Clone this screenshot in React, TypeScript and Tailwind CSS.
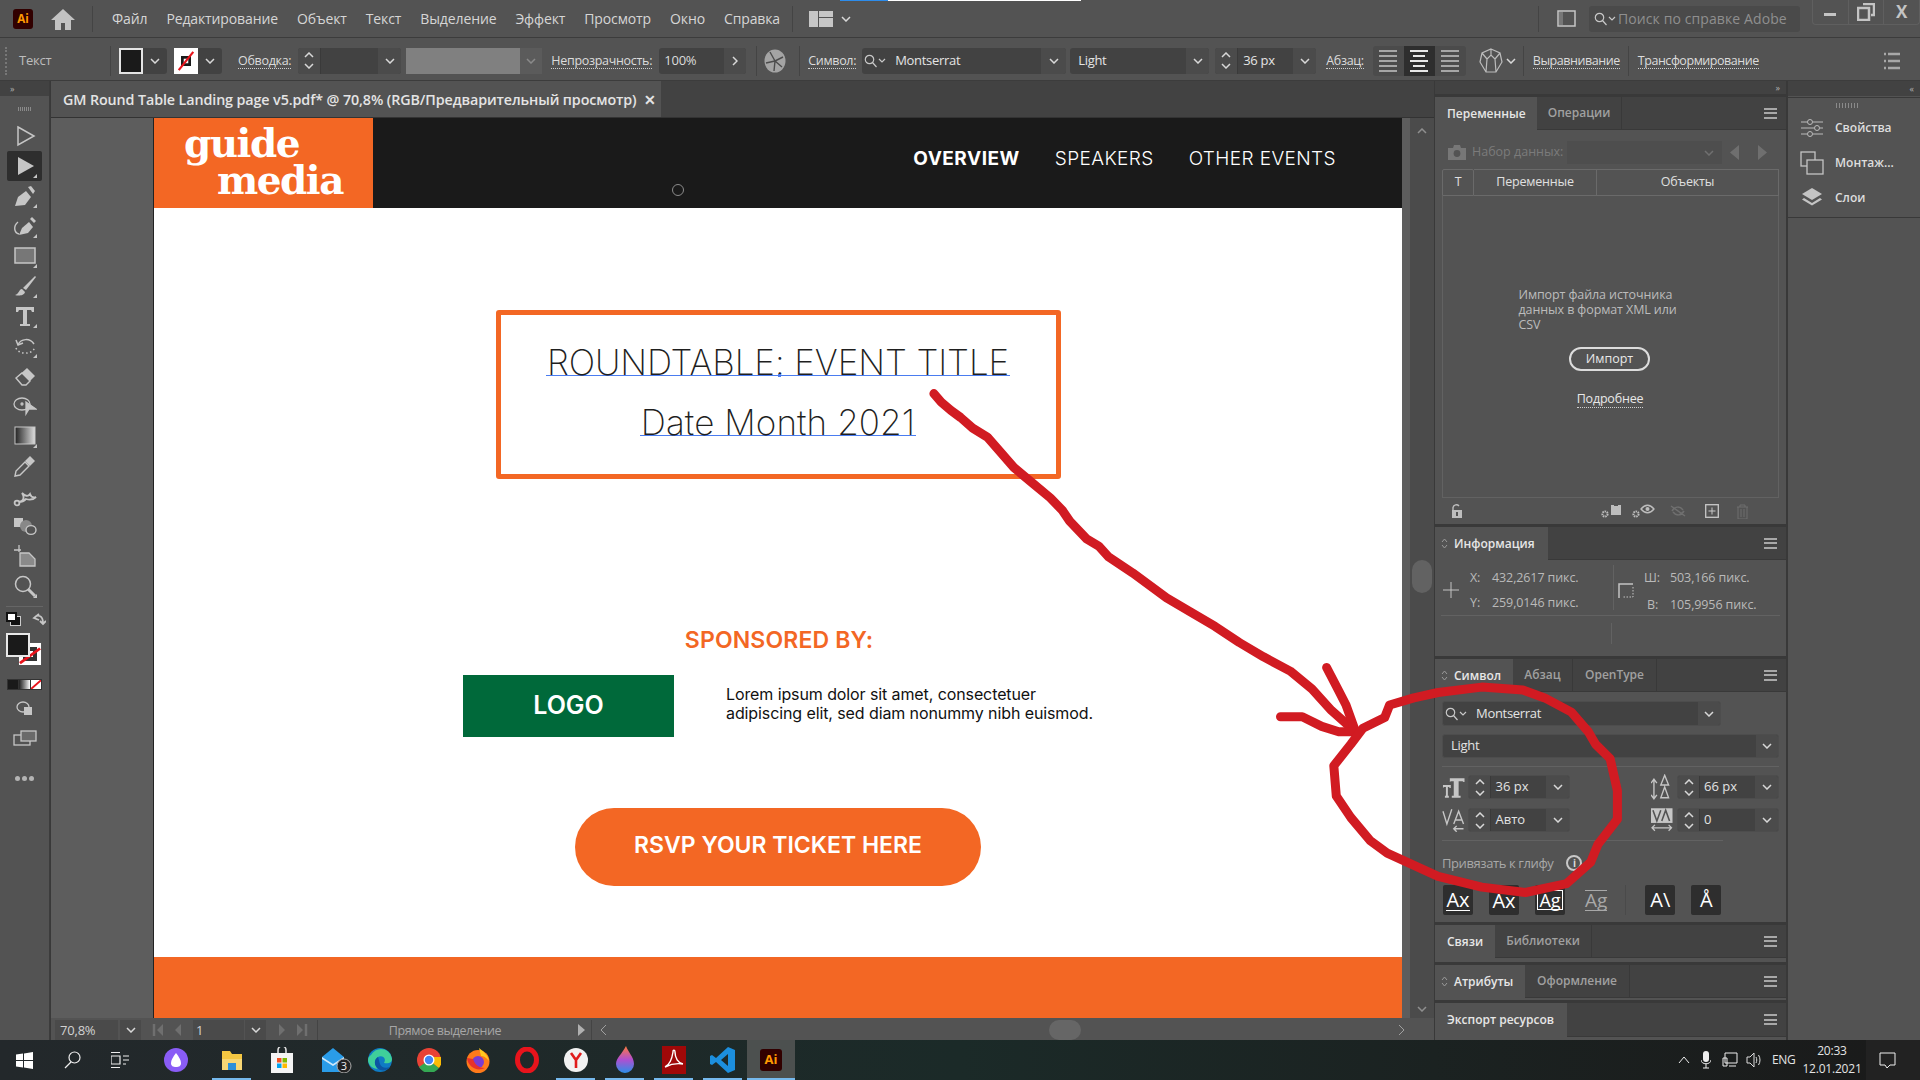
import React from "react";

const G = "#c6c6c6";

function Chev({ c = "#d8d8d8", w = 10, up = false }: { c?: string; w?: number; up?: boolean }) {
  return (
    <svg width={w} height={6} viewBox="0 0 10 6" className="shrink-0">
      <path d={up ? "M1 5l4-4 4 4" : "M1 1l4 4 4-4"} stroke={c} strokeWidth={1.5} fill="none" />
    </svg>
  );
}

function Step({ w = 23 }: { w?: number }) {
  return (
    <div className="flex flex-col items-center justify-center gap-[5px] border-r border-[#3a3a3a] bg-[#4b4b4b] shrink-0 h-full" style={{ width: w }}>
      <Chev up />
      <Chev />
    </div>
  );
}

function ChevBox({ w = 23 }: { w?: number }) {
  return (
    <div className="flex items-center justify-center bg-[#4b4b4b] h-full shrink-0" style={{ width: w }}>
      <Chev />
    </div>
  );
}

function Search() {
  return (
    <svg width={22} height={14} viewBox="0 0 22 14" className="shrink-0">
      <circle cx={5.5} cy={5.5} r={4.2} stroke="#c8c8c8" strokeWidth={1.2} fill="none" />
      <path d="M8.5 8.5l4 4.5M15 5l3 3 3-3" stroke="#c8c8c8" strokeWidth={1.2} fill="none" />
    </svg>
  );
}

function Hamburger() {
  return (
    <div className="ml-auto mr-[9px] flex flex-col gap-[2.5px]">
      <span className="block w-[13px] h-[2px] bg-[#a8a8a8]" />
      <span className="block w-[13px] h-[2px] bg-[#a8a8a8]" />
      <span className="block w-[13px] h-[2px] bg-[#a8a8a8]" />
    </div>
  );
}

function Sort() {
  return (
    <svg width={7} height={11} viewBox="0 0 7 11" className="shrink-0 mr-[6px]">
      <path d="M1 4l2.5-3L6 4M1 7l2.5 3L6 7" stroke="#9a9a9a" fill="none" />
    </svg>
  );
}

function Tabs({ tabs, sort = false, h = 33 }: { tabs: [string, number][]; sort?: boolean; h?: number }) {
  return (
    <div className="flex items-stretch bg-[#424242] border-b border-[#393939] shrink-0" style={{ height: h }}>
      {tabs.map(([t, w], i) => (
        <div
          key={t}
          className={
            i === 0
              ? "flex items-center bg-[#535353] text-[#e6e6e6] text-[12px] font-semibold -mb-px"
              : "flex items-center justify-center border-r border-[#393939] text-[#a0a0a0] text-[12px] font-semibold"
          }
          style={{ width: w, paddingLeft: i === 0 ? (sort ? 6 : 12) : 0 }}
        >
          {i === 0 && sort && <Sort />}
          {t}
        </div>
      ))}
      <div className="flex-1 flex items-center">
        <Hamburger />
      </div>
    </div>
  );
}

function Ai({ s = 20 }: { s?: number }) {
  return (
    <div className="flex items-center justify-center rounded-[3px] bg-[#310000] text-[#ff9a00] font-bold shrink-0" style={{ width: s, height: s, fontSize: s * 0.58 }}>
      Ai
    </div>
  );
}

function Uline({ children, cls = "" }: { children: React.ReactNode; cls?: string }) {
  return <span className={"text-[12.5px] leading-[15px] text-[#dcdcdc] border-b border-dotted border-[#cfcfcf] shrink-0 " + cls}>{children}</span>;
}

const Vsep = ({ cls = "" }: { cls?: string }) => <div className={"w-px h-[30px] bg-[#444] shrink-0 " + cls} />;

function TitleBar() {
  const menu = ["Файл", "Редактирование", "Объект", "Текст", "Выделение", "Эффект", "Просмотр", "Окно", "Справка"];
  return (
    <div className="relative h-[38px] flex items-center bg-[#535353] border-b border-[#3c3c3c] shrink-0">
      <div className="absolute top-0 left-[840px] h-px w-[48px] bg-[#2d8ceb]" />
      <div className="absolute top-0 left-[888px] h-px w-[193px] bg-white" />
      <div className="ml-[13px]"><Ai s={20} /></div>
      <svg width={24} height={22} viewBox="0 0 24 22" className="ml-[18px]"><path d="M12 1L0 12h4v10h6v-7h4v7h6V12h4z" fill="#c2c2c2" /></svg>
      <div className="ml-[17px] w-px h-[26px] bg-[#444]" />
      <div className="ml-[19px] flex gap-[19px] text-[14px] tracking-[-0.12px] text-[#d6d6d6]">
        {menu.map((m) => <span key={m}>{m}</span>)}
      </div>
      <div className="ml-[12px] w-px h-[26px] bg-[#444]" />
      <svg width={24} height={16} viewBox="0 0 24 16" className="ml-[16px]"><path d="M0 0h9v16H0zM10 0h14v6H10zM10 7h14v9H10z" fill="#c6c6c6" /></svg>
      <div className="ml-[8px]"><Chev /></div>
      <div className="ml-auto flex items-center h-full">
        <div className="w-px h-[26px] bg-[#444]" />
        <svg width={19} height={19} viewBox="0 0 19 19" className="ml-[18px]"><rect x={1} y={2} width={17} height={15} fill="none" stroke="#c6c6c6" strokeWidth={1.5} /><rect x={2} y={3} width={4} height={13} fill="#777" /></svg>
        <div className="ml-[13px] w-[211px] h-[26px] rounded-[3px] bg-[#4a4a4a] flex items-center pl-[5px] gap-[2px] text-[14px] tracking-[0.1px] text-[#8f8f8f] whitespace-nowrap overflow-hidden">
          <Search />
          <span>Поиск по справке Adobe</span>
        </div>
        <div className="ml-[12px] mb-[13px] w-[108px] h-[25px] flex border border-[#5f5f5f] rounded-b-[4px] border-t-0">
          <div className="flex-1 flex items-center justify-center border-r border-[#5f5f5f]"><span className="block w-[12px] h-[3px] bg-[#c4c4c4] mt-[5px]" /></div>
          <div className="flex-1 flex items-center justify-center border-r border-[#5f5f5f]">
            <svg width={18} height={18} viewBox="0 0 18 18"><path d="M6 1h11v11h-3M1 5h11v12H1z" fill="none" stroke="#c4c4c4" strokeWidth={2.5} /></svg>
          </div>
          <div className="flex-1 flex items-center justify-center text-[17px] font-bold text-[#c4c4c4]">X</div>
        </div>
      </div>
    </div>
  );
}

function Swatch({ stroke = false }: { stroke?: boolean }) {
  return (
    <div className="flex h-[26px] w-[48px] bg-[#424242] rounded-[3px] shrink-0 items-stretch">
      <div className={"w-[24px] relative border-2 " + (stroke ? "bg-white border-white" : "bg-[#1a1a1a] border-[#e4e4e4]")}>
        {stroke && (
          <svg viewBox="0 0 22 22" className="absolute inset-0 w-full h-full">
            <rect x={7} y={7} width={8} height={8} fill="none" stroke="#1a1a1a" strokeWidth={3} />
            <path d="M3 21L19 1" stroke="#e8141c" strokeWidth={2.4} />
          </svg>
        )}
      </div>
      <div className="flex-1 flex items-center justify-center"><Chev /></div>
    </div>
  );
}

function ControlBar() {
  return (
    <div className="h-[43px] flex items-center pt-[3px] bg-[#535353] border-b border-[#3c3c3c] shrink-0 text-[12.5px] text-[#dcdcdc]">
      <div className="ml-[5px] w-[2px] h-[28px] border-l-2 border-dotted border-[#777]" />
      <span className="ml-[12px] w-[91px] text-[13px] tracking-[-0.2px] text-[#bdbdbd]">Текст</span>
      <div className="w-px h-[30px] bg-[#444]" />
      <div className="ml-[8px]"><Swatch /></div>
      <div className="ml-[7px]"><Swatch stroke /></div>
      <Uline cls="ml-[16px] tracking-[-0.3px]">Обводка:</Uline>
      <div className="ml-[7px] flex h-[26px] w-[103px] rounded-[3px] overflow-hidden bg-[#424242]">
        <Step />
        <div className="w-[57px]" />
        <ChevBox />
      </div>
      <div className="ml-[5px] w-[114px] h-[26px] bg-[#808080]" />
      <div className="w-[22px] h-[26px] bg-[#5b5b5b] flex items-center justify-center"><Chev c="#8a8a8a" /></div>
      <Uline cls="ml-[9px] tracking-[-0.3px]">Непрозрачность:</Uline>
      <div className="ml-[7px] flex h-[26px] w-[87px] rounded-[3px] overflow-hidden bg-[#424242] items-center pl-[5px] text-[13px] tracking-[-0.2px]">
        <span className="w-[60px]">100%</span>
        <div className="flex-1 h-full bg-[#4b4b4b] flex items-center justify-center">
          <svg width={6} height={10} viewBox="0 0 6 10"><path d="M1 1l4 4-4 4" stroke="#d8d8d8" strokeWidth={1.5} fill="none" /></svg>
        </div>
      </div>
      <Vsep cls="ml-[10px]" />
      <svg width={22} height={24} viewBox="0 0 22 24" className="ml-[7px]"><ellipse cx={11} cy={12} rx={10.5} ry={11.5} fill="#a4a4a4" /><path d="M11 12L6 3M11 12l8-4M11 12l-1 10M11 12l7 6M11 12L2 14" stroke="#4c4c4c" strokeWidth={1.4} /></svg>
      <Vsep cls="ml-[13px]" />
      <Uline cls="ml-[8px] tracking-[-0.3px]">Символ:</Uline>
      <div className="ml-[6px] flex h-[26px] w-[204px] rounded-[3px] overflow-hidden bg-[#424242] items-center pl-[2px] text-[13px] tracking-[-0.3px] text-[#e4e4e4]">
        <Search />
        <span className="ml-[9px] flex-1">Montserrat</span>
        <ChevBox w={25} />
      </div>
      <div className="ml-[4px] flex h-[26px] w-[139px] rounded-[3px] overflow-hidden bg-[#424242] items-center pl-[8px] text-[13px] tracking-[-0.3px] text-[#e4e4e4]">
        <span className="flex-1">Light</span>
        <ChevBox w={23} />
      </div>
      <div className="ml-[6px] flex h-[26px] w-[101px] rounded-[3px] overflow-hidden bg-[#424242] items-center text-[13px] tracking-[-0.3px] text-[#e4e4e4]">
        <Step />
        <span className="ml-[5px] flex-1">36 px</span>
        <ChevBox />
      </div>
      <Uline cls="ml-[10px] tracking-[-0.3px]">Абзац:</Uline>
      <div className="ml-[9px] flex h-[30px] w-[93px] rounded-[3px] bg-[#4b4b4b] overflow-hidden">
        {[0, 1, 2].map((i) => (
          <div key={i} className={"flex-1 flex flex-col items-center justify-center gap-[3px] " + (i === 1 ? "bg-[#2e2e2e]" : "")}>
            {[18, 12, 18, 12, 18].map((w, k) => (
              <span key={k} className={"block h-[2px] " + (i === 1 ? "bg-[#e8e8e8]" : "bg-[#a6a6a6]")} style={{ width: i === 1 ? w : 18 }} />
            ))}
          </div>
        ))}
      </div>
      <svg width={24} height={26} viewBox="0 0 24 26" className="ml-[13px]"><path d="M12 1l9 4 2 9-6 10H7L1 14l2-9zM12 1v6M7 24l1-13 4-4 4 4 1 13M3 5l5 6M21 5l-5 6" fill="none" stroke="#bcbcbc" strokeWidth={1.2} /></svg>
      <div className="ml-[3px]"><Chev /></div>
      <Vsep cls="ml-[7px]" />
      <Uline cls="ml-[9px] tracking-[-0.45px]">Выравнивание</Uline>
      <Vsep cls="ml-[8px]" />
      <Uline cls="ml-[9px] tracking-[-0.45px]">Трансформирование</Uline>
      <svg width={16} height={18} viewBox="0 0 16 18" className="ml-auto mr-[20px]"><path d="M0 2h2M0 9h2M0 16h2M4 2h12M4 9h12M4 16h12" stroke="#a8a8a8" strokeWidth={2.4} /></svg>
    </div>
  );
}

const corner = <span className="absolute right-[5px] bottom-[3px] w-0 h-0 border-l-[4px] border-l-transparent border-b-[4px] border-b-[#c6c6c6]" />;

const toolIcons: [React.ReactNode, boolean][] = [
  [<path d="M5 3l16 9-16 9z" fill="none" stroke={G} strokeWidth={1.5} />, false],
  [<path d="M5 3l16 9-16 9z" fill={G} />, true],
  [<g fill={G}><path d="M2 22l3-9 8-6 5 6-6 8z" /><path d="M15 3l3-1 4 5-2 3z" /></g>, true],
  [<g fill={G}><path d="M6 21l3-7 7-6 4 5-5 6z" /><path d="M17 5l2-2 4 4-2 2z" /><path d="M5 8c-5 4-4 11 1 12" fill="none" stroke={G} strokeWidth={1.4} /></g>, true],
  [<rect x={2} y={4} width={20} height={15} fill="#777" stroke={G} strokeWidth={1.5} />, true],
  [<g fill={G}><path d="M10 14L22 2l1 1-10 13z" /><path d="M9 15c-3 0-3 5-7 6 3 1 9 1 10-3z" /></g>, true],
  [<path d="M3 3h18v5h-2l-1-2h-4v14h3v2H7v-2h3V6H6L5 8H3z" fill={G} />, true],
  [<g fill="none" stroke={G} strokeWidth={1.5}><path d="M5 11c3-7 12-7 16-1" /><path d="M3 14c2 6 16 8 19-1" strokeDasharray="1.5 2.5" /><path d="M3 6l2 5 5-2" /></g>, true],
  [<g><path d="M3 14L14 4l8 8-9 9H9z" fill={G} /><path d="M3 14l6-5 8 8-4 4H9z" fill="#535353" stroke={G} strokeWidth={1.4} /></g>, false],
  [<g fill="none" stroke={G} strokeWidth={1.3}><ellipse cx={9} cy={10} rx={8} ry={6} /><circle cx={9} cy={10} r={1} /><path d="M13 8l10 7h-7l-3 5z" fill={G} /></g>, false],
  [<g><defs><linearGradient id="tg"><stop offset="0" stopColor="#222" /><stop offset="1" stopColor="#ddd" /></linearGradient></defs><rect x={2} y={3} width={20} height={17} fill="url(#tg)" stroke={G} /></g>, true],
  [<g><path d="M2 22l1-5 9-9 4 4-9 9z" fill="none" stroke={G} strokeWidth={1.4} /><path d="M12 7l5-5 5 5-5 5z" fill={G} /></g>, false],
  [<g fill="none" stroke={G} strokeWidth={1.8}><circle cx={4} cy={19} r={2.4} /><path d="M6 18c6-1 5-6 3-9 3 3 6 4 8 1 1 3 3 4 6 3-3 3-7 3-10 2-2 2-5 3-7 3" /></g>, false],
  [<g><rect x={1} y={4} width={9} height={9} fill={G} /><circle cx={13} cy={12} r={6} fill="#888" /><ellipse cx={18} cy={16} rx={5} ry={4.4} fill="#535353" stroke={G} strokeWidth={1.4} /></g>, false],
  [<g fill="none" stroke={G} strokeWidth={1.3}><path d="M1 6h7M6 1v7" /><path d="M7 9h9l6 6v7H7z" fill="#8a8a8a" /></g>, false],
  [<g fill="none" stroke={G}><circle cx={10} cy={10} r={7.5} strokeWidth={1.5} /><path d="M15 15l7 7" strokeWidth={3} /></g>, true],
];

function Toolbar() {
  return (
    <div className="w-[50px] shrink-0 bg-[#535353] border-r border-[#3c3c3c] flex flex-col">
      <div className="h-[15px] bg-[#424242] flex items-center pl-[10px] text-[9px] leading-none text-[#b0b0b0]">»</div>
      <div className="h-[25px] flex justify-center items-center"><div className="w-[14px] h-[4px] bg-[repeating-linear-gradient(90deg,#8a8a8a_0_1px,transparent_1px_2px)]" /></div>
      {toolIcons.map(([ic, c], i) => (
        <div key={i} className={"relative mx-[7px] h-[30px] flex items-center justify-center rounded-[2px] " + (i === 1 ? "bg-[#2e2e2e]" : "")}>
          <svg width={24} height={24} viewBox="0 0 24 24">{ic}</svg>
          {c && corner}
        </div>
      ))}
      <div className="mx-[6px] mt-[5px] h-px bg-[#666]" />
      <div className="mt-[5px] h-[14px] relative mx-[6px]">
        <div className="absolute left-0 top-0 w-[11px] h-[10px] bg-white border-2 border-[#111] z-10" />
        <div className="absolute left-[4px] top-[4px] w-[11px] h-[10px] bg-[#111] border border-[#ccc]" />
        <svg width={14} height={14} viewBox="0 0 14 14" className="absolute left-[26px] top-0"><path d="M2 6c3-4 9-3 9 5M7 2L2 6l5 2M8 9l3 3 3-3" fill="none" stroke={G} strokeWidth={1.8} /></svg>
      </div>
      <div className="relative h-[33px] mx-[6px] mt-[7px]">
        <div className="absolute left-[12px] top-[9px] w-[24px] h-[24px] bg-white border border-[#555]">
          <div className="absolute left-[4px] top-[4px] w-[14px] h-[14px] border-[4px] border-[#333]" />
          <svg viewBox="0 0 24 24" className="absolute inset-0"><path d="M1 22L23 6" stroke="#e8141c" strokeWidth={3} /></svg>
        </div>
        <div className="absolute left-0 top-0 w-[24px] h-[24px] bg-[#1a1a1a] border-2 border-[#e8e8e8]" />
      </div>
      <div className="mx-[7px] mt-[13px] h-[11px] flex bg-[#333] p-px gap-px">
        <div className="flex-1 bg-[#1a1a1a]" />
        <div className="flex-1 bg-gradient-to-r from-[#222] to-white" />
        <div className="flex-1 bg-white relative overflow-hidden"><svg viewBox="0 0 10 10" preserveAspectRatio="none" className="absolute inset-0 w-full h-full"><path d="M0 10L10 0" stroke="#e8141c" strokeWidth={2} /></svg></div>
      </div>
      <div className="mt-[11px] flex justify-center"><svg width={18} height={14} viewBox="0 0 18 14"><ellipse cx={7} cy={6} rx={6} ry={5} fill="none" stroke={G} strokeWidth={1.3} /><rect x={8} y={6} width={8} height={8} fill={G} /></svg></div>
      <div className="mt-[15px] flex justify-center"><svg width={24} height={16} viewBox="0 0 24 16"><rect x={1} y={5} width={16} height={10} fill="none" stroke={G} strokeWidth={1.3} /><rect x={8} y={1} width={15} height={10} fill="#6a6a6a" stroke={G} strokeWidth={1.3} /></svg></div>
      <div className="mt-[30px] flex justify-center gap-[2px]">
        {[0, 1, 2].map((i) => <span key={i} className="block w-[5px] h-[5px] rounded-full bg-[#b4b4b4]" />)}
      </div>
    </div>
  );
}

const mont = "font-['Inter',sans-serif]";

function Artboard() {
  return (
    <div className="w-[1249px] h-full flex flex-col bg-white border-l border-[#222] shrink-0 relative">
      <div className="relative h-[90px] flex shrink-0 bg-[#1a1a1a]">
        <div className="w-[219px] bg-[#f36724] font-['DejaVu_Serif',serif] font-bold text-white text-[39px] leading-[37px] tracking-[-1.5px] pl-[30px] pt-[7px]">
          <div>guide</div>
          <div className="pl-[33px]">media</div>
        </div>
        <div className={"flex-1 flex items-center justify-end pr-[66px] pb-[8px] text-white text-[19px] gap-[35px] " + mont}>
          <span className="font-bold tracking-[0.5px]">OVERVIEW</span>
          <span className="font-light tracking-[0.4px]">SPEAKERS</span>
          <span className="font-light tracking-[0.4px]">OTHER EVENTS</span>
        </div>
        <span className="absolute left-[518px] top-[66px] w-[12px] h-[12px] rounded-full border border-[#8b8b8b]" />
      </div>
      <div className={"flex-1 flex flex-col items-center " + mont}>
        <div className="mt-[102px] w-[565px] h-[169px] border-[5px] border-[#f36724] rounded-[3px] flex flex-col items-center text-[#1f1f1f] text-[35px] font-extralight">
          <div className="mt-[33px] h-[28px] leading-[28px] border-b border-[#4a7cf0] tracking-[-0.1px] px-[1px] relative">
            ROUNDTABLE: EVENT TITLE
            <span className="absolute left-1/2 -bottom-[2px] w-[3px] h-[3px] bg-[#4a7cf0]" />
          </div>
          <div className="mt-[32px] h-[28px] leading-[28px] border-b border-[#4a7cf0] tracking-[0.1px] px-[1px]">Date Month 2021</div>
        </div>
        <div className="mt-[148px] text-[#f36724] text-[23px] font-semibold tracking-[0.15px] leading-[27px] ml-[2px]">SPONSORED BY:</div>
        <div className="mt-[21px] w-full pl-[309px] flex items-center">
          <div className="w-[211px] h-[62px] bg-[#00693a] flex items-center justify-center text-white text-[25px] font-semibold">LOGO</div>
          <div className="ml-[52px] text-[16px] leading-[19px] text-[#111] tracking-[-0.1px] mb-[4px]">
            <div>Lorem ipsum dolor sit amet, consectetuer</div>
            <div>adipiscing elit, sed diam nonummy nibh euismod.</div>
          </div>
        </div>
        <div className="mt-[71px] w-[406px] h-[78px] rounded-[39px] bg-[#f36724] flex items-center justify-center text-white text-[23px] font-semibold pb-[3px]">RSVP YOUR TICKET HERE</div>
      </div>
      <div className="h-[61px] bg-[#f36724] shrink-0" />
    </div>
  );
}

function StatusBar() {
  const Nav = ({ r = false, first = false }: { r?: boolean; first?: boolean }) => (
    <svg width={14} height={14} viewBox="0 0 14 14" style={{ transform: r ? "scaleX(-1)" : undefined }}>
      <path d="M12 1L6 7l6 6z" fill="#6f6f6f" />
      {first && <path d="M3 1v12" stroke="#6f6f6f" strokeWidth={2.5} />}
    </svg>
  );
  return (
    <div className="h-[22px] shrink-0 flex items-center bg-[#535353] text-[13px] tracking-[-0.2px] text-[#d2d2d2] pt-[2px]">
      <div className="ml-[4px] w-[63px] h-full bg-[#4a4a4a] pl-[5px] pt-[2px] flex items-center">70,8%</div>
      <div className="ml-[2px] w-[21px] h-full bg-[#4a4a4a] flex items-center justify-center"><Chev /></div>
      <div className="ml-[10px] flex gap-[4px]"><Nav first /><Nav /></div>
      <div className="ml-[10px] w-[51px] h-full bg-[#4a4a4a] pl-[3px] pt-[2px] flex items-center">1</div>
      <div className="ml-px w-[21px] h-full bg-[#4a4a4a] flex items-center justify-center"><Chev /></div>
      <div className="ml-[11px] flex gap-[4px]"><Nav r /><Nav r first /></div>
      <div className="ml-[8px] w-px h-full bg-[#444]" />
      <div className="w-[260px] text-center text-[#a6a6a6] pr-[6px] pt-[3px] text-[12.5px] tracking-[-0.4px]">Прямое выделение</div>
      <svg width={7} height={12} viewBox="0 0 7 12"><path d="M0 0l7 6-7 6z" fill="#b0b0b0" /></svg>
      <div className="ml-[6px] w-px h-full bg-[#444]" />
      <svg width={7} height={12} viewBox="0 0 7 12" className="ml-[8px]"><path d="M6 1L1 6l5 5" stroke="#a0a0a0" fill="none" /></svg>
      <div className="ml-[442px] w-[32px] h-full rounded-[14px] bg-[#666]" />
      <svg width={7} height={12} viewBox="0 0 7 12" className="ml-[317px]"><path d="M1 1l5 5-5 5" stroke="#a0a0a0" fill="none" /></svg>
    </div>
  );
}

function Center() {
  return (
    <div className="w-[1383px] ml-[1px] shrink-0 flex flex-col">
      <div className="h-[37px] shrink-0 flex bg-[#424242] border-b border-[#333]">
        <div className="w-[610px] bg-[#535353] flex items-center pl-[12px] pt-[1px] text-[14.3px] font-semibold tracking-[-0.1px] text-[#e4e4e4] whitespace-nowrap">
          GM Round Table Landing page v5.pdf* @ 70,8% (RGB/Предварительный просмотр)
          <span className="ml-auto mr-[5px] text-[14px] font-bold">✕</span>
        </div>
      </div>
      <div className="flex-1 flex min-h-0">
        <div className="w-[102px] bg-[#5d5d5d] shrink-0" />
        <Artboard />
        <div className="w-[8px] bg-[#5d5d5d] shrink-0" />
        <div className="flex-1 bg-[#4b4b4b] flex flex-col items-center pt-[10px] pb-[6px]">
          <Chev c="#8f8f8f" up />
          <div className="mt-[426px] w-[20px] h-[33px] rounded-[10px] bg-[#626262]" />
          <div className="mt-auto"><Chev c="#8f8f8f" /></div>
        </div>
      </div>
      <StatusBar />
    </div>
  );
}

const cellH = "flex items-center h-[24px] rounded-[3px] bg-[#424242] border border-[#4d4d4d] overflow-hidden";

function Spin({ v }: { v: string }) {
  return (
    <div className={cellH + " w-[102px] text-[13px] text-[#e2e2e2]"}>
      <Step w={22} />
      <span className="flex-1 pl-[4px]">{v}</span>
      <ChevBox w={23} />
    </div>
  );
}

function GlyphBtn({ children }: { children: React.ReactNode }) {
  return <div className="w-[30px] h-[30px] rounded-[2px] bg-[#2e2e2e] flex items-center justify-center text-white text-[20px] leading-none shrink-0">{children}</div>;
}

function Panels() {
  const ic = { fill: "none", stroke: "#bdbdbd", strokeWidth: 1.3 };
  return (
    <div className="w-[351px] shrink-0 ml-[1px] flex flex-col gap-[3px] bg-[#393939]">
      <div className="h-[13px] bg-[#424242] flex items-center justify-end pr-[6px] text-[9px] leading-none text-[#b0b0b0]">»</div>

      <div className="h-[427px] shrink-0 flex flex-col bg-[#535353]">
        <Tabs tabs={[["Переменные", 102], ["Операции", 85]]} />
        <div className="h-[39px] shrink-0 flex items-center pl-[13px] pt-[6px] text-[12.5px] text-[#7b7b7b]">
          <svg width={18} height={15} viewBox="0 0 18 15"><path d="M0 3h5l1-3h6l1 3h5v12H0z" fill="#777" /><circle cx={9} cy={8.5} r={3.4} fill="#535353" /></svg>
          <span className="ml-[6px]">Набор данных:</span>
          <div className="ml-[4px] w-[155px] h-[23px] bg-[#4e4e4e] flex items-center justify-end pr-[8px]"><Chev c="#707070" /></div>
          <svg width={37} height={15} viewBox="0 0 37 15" className="ml-[8px]"><path d="M9 0v15L0 7.5zM28 0v15l9-7.5z" fill="#6f6f6f" /></svg>
        </div>
        <div className="mx-[7px] flex h-[27px] text-[12.5px] tracking-[-0.2px] text-[#e0e0e0] shrink-0">
          <div className="w-[32px] border border-[#6a6a6a] rounded-t-[2px] flex items-center justify-center">T</div>
          <div className="w-[123px] border border-[#6a6a6a] border-l-0 flex items-center justify-center">Переменные</div>
          <div className="flex-1 border border-[#6a6a6a] border-l-0 flex items-center justify-center">Объекты</div>
        </div>
        <div className="mx-[7px] flex-1 border border-t-0 border-[#626262] flex flex-col items-center">
          <div className="mt-[91px] w-[180px] ml-[-4px] text-[12.5px] leading-[15px] tracking-[-0.1px] text-[#bcbcbc]">Импорт файла источника данных в формат XML или CSV</div>
          <div className="mt-[15px] w-[81px] h-[24px] rounded-full border-2 border-[#dcdcdc] flex items-center justify-center text-[12.5px] text-[#e8e8e8] -ml-[2px]">Импорт</div>
          <div className="mt-[14px] -ml-[1px]"><span className="text-[12.5px] tracking-[-0.2px] text-[#e8e8e8] border-b border-dotted border-[#cfcfcf]">Подробнее</span></div>
        </div>
        <div className="h-[26px] shrink-0 relative flex items-center pl-[16px]">
          <svg width={13} height={14} viewBox="0 0 13 14"><path d="M2 6V3.5a3.5 3.5 0 016-1.5" fill="none" stroke="#bdbdbd" strokeWidth={1.4} /><rect x={1} y={6} width={10} height={8} fill="#bdbdbd" /><rect x={5} y={8} width={2} height={4} fill="#535353" /></svg>
          <svg width={24} height={14} viewBox="0 0 24 14" className="ml-[136px]"><circle cx={5} cy={10} r={2.6} {...ic} strokeWidth={2} strokeDasharray="1.5 0.8" /><path d="M11 1h3v1h4V1h3v10H11z" fill="#bdbdbd" /></svg>
          <svg width={24} height={14} viewBox="0 0 24 14" className="ml-[7px]"><circle cx={5} cy={10} r={2.6} {...ic} strokeWidth={2} strokeDasharray="1.5 0.8" /><path d="M10 5c4-5 9-5 13 0-4 5-9 5-13 0z" {...ic} /><circle cx={16.5} cy={5} r={2} fill="#bdbdbd" /></svg>
          <svg width={18} height={14} viewBox="0 0 18 14" className="ml-[14px]"><path d="M3 7c3-5 8-5 11-1M15 7c-3 5-8 5-11 1M2 2l14 10" fill="none" stroke="#6f6f6f" strokeWidth={1.5} /></svg>
          <svg width={14} height={14} viewBox="0 0 14 14" className="ml-[18px]"><rect x={.7} y={.7} width={12.6} height={12.6} fill="none" stroke="#c8c8c8" strokeWidth={1.3} /><path d="M7 3.5v7M3.5 7h7" stroke="#c8c8c8" /></svg>
          <svg width={13} height={15} viewBox="0 0 13 15" className="ml-[17px]"><path d="M1 3h11M4 3V1h5v2M2 3v12h9V3M5 5v8M8 5v8" fill="none" stroke="#6f6f6f" /></svg>
        </div>
      </div>

      <div className="h-[129px] shrink-0 flex flex-col bg-[#535353]">
        <Tabs sort tabs={[["Информация", 113]]} />
        <div className="relative flex-1 text-[12.5px] tracking-[-0.1px] text-[#bababa]">
          <div className="flex h-[56px] mx-[6px] border-b border-[#626262] pt-[10px]">
            <svg width={18} height={18} viewBox="0 0 18 18" className="mt-[11px] ml-px"><path d="M9 1v16M1 9h16" stroke="#c4c4c4" /></svg>
            <div className="ml-[9px] w-[144px] flex flex-col gap-[10px] leading-[15px]">
              <div className="flex"><span className="w-[23px] pl-[1px]">X:</span>432,2617 пикс.</div>
              <div className="flex"><span className="w-[23px] pl-[1px]">Y:</span>259,0146 пикс.</div>
            </div>
            <div className="w-px h-[45px] bg-[#626262] -mt-[5px]" />
            <svg width={18} height={18} viewBox="0 0 18 18" className="mt-[11px] ml-[3px]"><path d="M2 17V3h14" fill="none" stroke="#c4c4c4" strokeWidth={1.5} /><path d="M16 6v10H6" fill="none" stroke="#c4c4c4" strokeDasharray="1.5 1.5" /></svg>
            <div className="ml-[9px] flex flex-col gap-[10px] leading-[15px]">
              <div className="flex"><span className="w-[26px]">Ш:</span>503,166 пикс.</div>
              <div className="flex mt-[2px]"><span className="w-[26px] pl-[3px]">В:</span>105,9956 пикс.</div>
            </div>
          </div>
          <div className="ml-[176px] mt-[7px] w-px h-[21px] bg-[#626262]" />
        </div>
      </div>

      <div className="h-[263px] shrink-0 flex flex-col bg-[#535353]">
        <Tabs sort tabs={[["Символ", 78], ["Абзац", 60], ["OpenType", 84]]} />
        <div className="px-[7px] flex flex-col flex-1">
          <div className={cellH + " mt-[9px] w-[279px] h-[25px] pl-[2px] text-[13px] tracking-[-0.3px] text-[#e4e4e4]"}>
            <Search />
            <span className="ml-[9px] flex-1">Montserrat</span>
            <ChevBox w={22} />
          </div>
          <div className={cellH + " mt-[8px] w-full pl-[8px] text-[13px] tracking-[-0.3px] text-[#e4e4e4]"}>
            <span className="flex-1">Light</span>
            <ChevBox w={22} />
          </div>
          <div className="mt-[8px] h-px bg-[#626262]" />
          <div className="mt-[7px] flex items-center">
            <svg width={24} height={24} viewBox="0 0 24 24"><path d="M8 3h15v4h-1l-1-1h-4v15h2v2H10v-2h2V6H9L8 7zM1 10h8v3H8l-1-1H6v9h1v2H3v-2h1v-9H2l-1 1z" fill={G} /></svg>
            <div className="ml-[3px]"><Spin v="36 px" /></div>
            <svg width={22} height={26} viewBox="0 0 22 26" className="ml-[81px]"><path d="M14 1l-4 10h8zM14 13l-4 11h8zM3 6v18M0 9l3-4 3 4M0 21l3 4 3-4" fill="none" stroke={G} strokeWidth={1.4} /></svg>
            <div className="ml-[4px]"><Spin v="66 px" /></div>
          </div>
          <div className="mt-[8px] flex items-center">
            <svg width={24} height={24} viewBox="0 0 24 24"><path d="M1 3l4 13 5-15M12 16l5-13 5 13M14 12h6M22 21H12M15 18l-3 3 3 3" fill="none" stroke={G} strokeWidth={1.4} /></svg>
            <div className="ml-[3px]"><Spin v="Авто" /></div>
            <svg width={22} height={24} viewBox="0 0 22 24" className="ml-[81px]"><rect width={22} height={15} fill={G} /><path d="M2 2l4 11 4-11M11 13l4-11 4 11" fill="none" stroke="#535353" strokeWidth={1.6} /><path d="M1 20h20M4 17l-3 3 3 3M18 17l3 3-3 3" fill="none" stroke={G} strokeWidth={1.3} /></svg>
            <div className="ml-[4px]"><Spin v="0" /></div>
          </div>
          <div className="mt-[8px] w-[281px] h-px bg-[#626262]" />
          <div className="mt-[13px] flex items-center text-[13px] tracking-[-0.4px] text-[#a8a8a8] leading-[18px]">
            Привязать к глифу
            <span className="ml-[13px] w-[16px] h-[16px] rounded-full border-2 border-[#c8c8c8] flex items-center justify-center text-[10px] font-bold text-[#d8d8d8]">i</span>
          </div>
          <div className="mt-[13px] flex items-center pl-[1px]">
            <GlyphBtn><span className="border-b border-white">Ax</span></GlyphBtn>
            <div className="ml-[16px]"><GlyphBtn><span className="border-t border-white">Ax</span></GlyphBtn></div>
            <div className="ml-[16px]"><GlyphBtn><span className="border border-white px-[1px] text-[18px]">Ag</span></GlyphBtn></div>
            <span className="ml-[20px] text-[19px] text-[#a8a8a8] border-b border-t border-[#a8a8a8] leading-[19px]">Ag</span>
            <div className="ml-[18px] w-px h-[30px] bg-[#4a4a4a]" />
            <div className="ml-[19px]"><GlyphBtn>A\</GlyphBtn></div>
            <div className="ml-[16px]"><GlyphBtn>Å</GlyphBtn></div>
          </div>
        </div>
      </div>

      <div className="h-[37px] shrink-0 bg-[#535353]"><Tabs tabs={[["Связи", 60], ["Библиотеки", 97]]} /></div>
      <div className="h-[35px] shrink-0 bg-[#535353]"><Tabs sort tabs={[["Атрибуты", 90], ["Оформление", 105]]} /></div>
      <div className="flex-1 bg-[#535353]"><Tabs tabs={[["Экспорт ресурсов", 132]]} h={34} /></div>
    </div>
  );
}

function Dock() {
  const row = "flex items-center h-[35px] text-[12px] font-semibold text-[#dedede]";
  return (
    <div className="flex-1 ml-[2px] flex flex-col bg-[#535353]">
      <div className="h-[15px] bg-[#424242] flex items-center justify-end pr-[6px] text-[9px] leading-none text-[#b0b0b0]">«</div>
      <div className="mt-[1px] h-[121px] border-b border-[#393939] shrink-0 border-t-[#393939] border-t">
        <div className="h-[14px] flex justify-center items-center -ml-[12px]"><div className="w-[24px] h-[5px] bg-[repeating-linear-gradient(90deg,#8a8a8a_0_1px,transparent_1px_3px)]" /></div>
        <div className="mt-[-2px]">
          <div className={row}>
            <svg width={22} height={18} viewBox="0 0 22 18" className="ml-[13px]"><g fill="none" stroke="#bcbcbc"><path d="M0 3h6M12 3h10M0 9h13M19 9h3M0 15h6M12 15h10" /><circle cx={9} cy={3} r={2.5} /><circle cx={16} cy={9} r={2.5} /><circle cx={9} cy={15} r={2.5} /></g></svg>
            <span className="ml-[12px]">Свойства</span>
          </div>
          <div className={row}>
            <svg width={24} height={24} viewBox="0 0 24 24" className="ml-[12px]"><g fill="none" stroke="#c4c4c4" strokeWidth={1.3}><rect x={1} y={1} width={14} height={14} /><rect x={7} y={9} width={16} height={14} fill="#535353" /></g></svg>
            <span className="ml-[11px]">Монтаж...</span>
          </div>
          <div className={row}>
            <svg width={22} height={22} viewBox="0 0 22 22" className="ml-[13px]"><path d="M11 1l10 6-10 6L1 7z" fill="#c4c4c4" /><path d="M3 11l8 5 8-5 2 1.5-10 6-10-6z" fill="#c4c4c4" /></svg>
            <span className="ml-[12px]">Слои</span>
          </div>
        </div>
      </div>
    </div>
  );
}

function Scribble() {
  const map = (p: number[][]) => p.map(([x, y]) => `${(900 + x / 2.063).toFixed(1)},${(380 + y / 2.8).toFixed(1)}`).join(" ");
  const shaft = [[70, 38], [85, 62], [105, 85], [125, 105], [150, 135], [180, 160], [200, 190], [235, 245], [270, 285], [310, 330], [335, 365], [350, 395], [385, 445], [410, 465], [430, 495], [480, 540], [550, 610], [600, 650], [650, 690], [700, 735], [750, 775], [805, 815], [850, 865], [890, 925], [940, 985]];
  const head = [[785, 943], [830, 943], [870, 970], [905, 985], [940, 985], [920, 910], [905, 870], [880, 805]];
  const loop = [[1010, 910], [1060, 890], [1110, 875], [1200, 860], [1285, 868], [1330, 890], [1385, 930], [1420, 985], [1435, 1020], [1465, 1060], [1480, 1150], [1480, 1230], [1440, 1300], [1425, 1350], [1375, 1410], [1290, 1435], [1200, 1420], [1110, 1390], [1005, 1325], [970, 1290], [930, 1225], [900, 1165], [895, 1080], [930, 1020], [955, 975], [1000, 945], [1010, 910]];
  return (
    <svg width={1920} height={1080} viewBox="0 0 1920 1080" className="absolute inset-0 pointer-events-none">
      <g fill="none" stroke="#d11b22" strokeWidth={9} strokeLinejoin="round" strokeLinecap="round">
        <polyline points={map(shaft)} />
        <polyline points={map(head)} />
        <polyline points={map(loop)} />
      </g>
    </svg>
  );
}

function Taskbar() {
  const box = "w-[49px] h-full flex items-center justify-center relative shrink-0";
  const Under = () => <span className="absolute bottom-0 left-[5px] right-[5px] h-[2px] bg-[#76b9ed]" />;
  return (
    <div className="h-[40px] shrink-0 flex items-center bg-gradient-to-r from-[#23282b] via-[#1b2a28] to-[#1a1a1a] text-[#e4e4e4]">
      <div className="w-[48px] flex justify-center">
        <svg width={17} height={17} viewBox="0 0 17 17"><path d="M0 2.5l7-1V8H0zM8 1.4l9-1.4v8H8zM0 9h7v6.5l-7-1zM8 9h9v8l-9-1.4z" fill="#fff" /></svg>
      </div>
      <div className="w-[48px] flex justify-center">
        <svg width={17} height={18} viewBox="0 0 17 18"><circle cx={10.5} cy={6.5} r={5.5} fill="none" stroke="#eee" strokeWidth={1.2} /><path d="M7 11l-6 6" stroke="#eee" strokeWidth={1.3} /></svg>
      </div>
      <div className="w-[48px] flex justify-center">
        <svg width={18} height={16} viewBox="0 0 18 16"><path d="M0 .5h9M0 15.5h9M0 4h9v8H0zM12 4h6M12 8h6M12 12h3" fill="none" stroke="#eee" strokeWidth={1.2} /></svg>
      </div>
      <div className="w-[32px] ml-[16px] flex justify-center">
        <svg width={24} height={24} viewBox="0 0 24 24"><circle cx={12} cy={12} r={12} fill="#8a5cf6" /><path d="M12 5c3 4 5 7 5 10s-2 4-5 4-5-1-5-4 2-6 5-10z" fill="#fff" /></svg>
      </div>
      <div className={box + " ml-[15px]"}>
        <svg width={24} height={24} viewBox="0 0 24 24"><path d="M2 3h8l2 3h10v16H2z" fill="#f5c742" /><rect x={2} y={11} width={20} height={11} fill="#f8d775" /><path d="M8 22v-7h8v7" fill="#2d90d9" /></svg>
        <Under />
      </div>
      <div className={box + " ml-[1px]"}>
        <svg width={24} height={26} viewBox="0 0 24 26"><path d="M8 6V3a4 4 0 018 0v3" fill="none" stroke="#ddd" strokeWidth={1.6} /><rect x={1} y={6} width={22} height={20} fill="#f4f4f4" /><rect x={7} y={11} width={4.5} height={4.5} fill="#f25022" /><rect x={12.5} y={11} width={4.5} height={4.5} fill="#7fba00" /><rect x={7} y={16.5} width={4.5} height={4.5} fill="#00a4ef" /><rect x={12.5} y={16.5} width={4.5} height={4.5} fill="#ffb900" /></svg>
      </div>
      <div className={box + " ml-[6px]"}>
        <svg width={30} height={26} viewBox="0 0 30 26"><path d="M0 10L11 1l11 9v15H0z" fill="#2a9ce8" /><path d="M0 10l11 7 11-7v2l-11 7-11-7z" fill="#cfe8fa" /><circle cx={22} cy={19} r={7} fill="#222" stroke="#aaa" /><text x={22} y={23} textAnchor="middle" fontSize={11} fill="#eee">3</text></svg>
      </div>
      <div className={box + " -ml-[6px]"}>
        <svg width={24} height={24} viewBox="0 0 24 24"><circle cx={12} cy={12} r={12} fill="#0f7bc4" /><path d="M3 7C8-2 22-1 24 11c0 4-4 5-8 4 3-5-2-8-6-6-3 2-5 7 0 12-5 0-10-4-10-9 0-2 1-4 3-5z" fill="#3fcf9a" /><path d="M10 9c-4 2-5 9 2 13 4 1 8 0 10-3-5 2-9 0-10-3-1-2-1-5-2-7z" fill="#0c55a3" /></svg>
      </div>
      <div className={box}>
        <svg width={24} height={24} viewBox="0 0 24 24"><circle cx={12} cy={12} r={12} fill="#e94235" /><path d="M12 12L2 19a12 12 0 0020 1z" fill="#34a853" /><path d="M12 12l10 8A12 12 0 0024 9H12z" fill="#fbbc05" /><circle cx={12} cy={12} r={5.5} fill="#fff" /><circle cx={12} cy={12} r={4.2} fill="#4285f4" /></svg>
      </div>
      <div className={box}>
        <svg width={24} height={26} viewBox="0 0 24 26"><circle cx={12} cy={14.5} r={11.5} fill="#ff7a1a" /><path d="M13 1c4 3 9 7 10 13-3-4-6-5-8-5z" fill="#ffc81f" /><circle cx={12} cy={15} r={6} fill="#7a3bd1" /><path d="M1 11c1 9 10 14 18 10-6 0-10-3-12-9z" fill="#e8312a" /></svg>
      </div>
      <div className={box}>
        <svg width={24} height={26} viewBox="0 0 24 26"><ellipse cx={12} cy={13} rx={9.5} ry={11} fill="none" stroke="#e8141c" strokeWidth={5} /></svg>
      </div>
      <div className={box}>
        <svg width={24} height={24} viewBox="0 0 24 24"><circle cx={12} cy={12} r={12} fill="#f2f2f2" /><path d="M7 5l5 7 5-7M12 12v8" fill="none" stroke="#e01c1c" strokeWidth={2.6} /></svg>
        <Under />
      </div>
      <div className={box}>
        <svg width={20} height={28} viewBox="0 0 20 28"><defs><linearGradient id="dr" x1="0" y1="0" x2="0" y2="1"><stop offset="0" stopColor="#ff7a3c" /><stop offset=".5" stopColor="#b14fd0" /><stop offset="1" stopColor="#2a8fe8" /></linearGradient></defs><path d="M11 0c2 6 8 11 8 18a9 9 0 01-18 0C1 12 7 8 11 0z" fill="url(#dr)" /></svg>
        <Under />
      </div>
      <div className={box}>
        <svg width={24} height={28} viewBox="0 0 24 28"><rect width={24} height={28} fill="#a00808" /><path d="M3 21c4-2 7-8 8-15 0-3 2-2 2 0 0 6 3 11 8 12-6-1-12 0-18 3z" fill="none" stroke="#fff" strokeWidth={1.4} /></svg>
        <Under />
      </div>
      <div className={box}>
        <svg width={25} height={26} viewBox="0 0 25 26"><path d="M18 0l7 3v20l-7 3L6 15l-4 3-2-1V9l2-1 4 3zM18 7l-7 6 7 6z" fill="#1c8fde" /></svg>
        <Under />
      </div>
      <div className="w-[48px] h-full relative flex items-center justify-center bg-[#4c504f] shrink-0">
        <div className="flex items-center justify-center rounded-[3px] bg-[#310000] text-[#ff9a00] font-bold w-[22px] h-[22px] text-[13px]">Ai</div>
        <span className="absolute bottom-0 left-0 right-0 h-[2px] bg-[#76b9ed]" />
      </div>
      <div className="ml-auto flex items-center h-full text-[12px]">
        <svg width={12} height={8} viewBox="0 0 12 8"><path d="M1 7l5-6 5 6" fill="none" stroke="#eee" /></svg>
        <svg width={10} height={18} viewBox="0 0 10 18" className="ml-[11px]"><rect x={2} width={6} height={11} rx={3} fill="#eee" /><path d="M0 9c0 5 10 5 10 0M5 13v4M2 17h6" fill="none" stroke="#eee" /></svg>
        <svg width={16} height={16} viewBox="0 0 16 16" className="ml-[11px]"><path d="M3 1h12v10H3zM1 6h4v8H1zM7 14h7" fill="none" stroke="#eee" /></svg>
        <svg width={16} height={16} viewBox="0 0 16 16" className="ml-[8px]"><path d="M1 5h3l4-4v14l-4-4H1zM10 5c1 2 1 4 0 6M12.5 3c2 3 2 7 0 10" fill="none" stroke="#ddd" /></svg>
        <span className="ml-[10px] tracking-[-0.3px] w-[27px]">ENG</span>
        <div className="ml-[3px] w-[60px] text-center leading-[18px] tracking-[-0.2px]"><div>20:33</div><div>12.01.2021</div></div>
        <div className="ml-[4px] w-[54px] h-full bg-[#222] flex items-center justify-center pr-[12px]">
          <svg width={17} height={17} viewBox="0 0 17 17"><path d="M1 1h15v12h-5l-3 3-2-3H1z" fill="none" stroke="#eee" /></svg>
        </div>
      </div>
    </div>
  );
}

export default function App() {
  return (
    <div className="relative w-[1920px] h-[1080px] overflow-hidden flex flex-col bg-[#393939] font-['Open_Sans',sans-serif]">
      <TitleBar />
      <ControlBar />
      <div className="h-[959px] flex">
        <Toolbar />
        <Center />
        <Panels />
        <Dock />
      </div>
      <Taskbar />
      <Scribble />
    </div>
  );
}
